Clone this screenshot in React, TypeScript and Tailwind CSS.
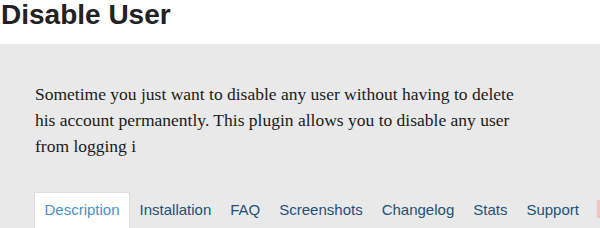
export default function App() {
    const tabs = ["Installation", "FAQ", "Screenshots", "Changelog", "Stats", "Support"];

    return (
        <div className="w-[600px] h-[228px] overflow-hidden bg-white">
            {/* Title */}
            <div className="h-[44px] pl-[1px]">
                <h1
                    className="text-[28px] leading-[30px] font-bold text-[#222]"
                    style={{ fontFamily: '"Liberation Sans", Arial, sans-serif' }}
                >
                    Disable User
                </h1>
            </div>

            {/* Plugin header panel */}
            <div className="h-[184px] bg-[#e9e9e9] pl-[35px] pt-[37px] flex flex-col">
                <p
                    className="text-[17.5px] leading-[26px] text-[#1a1a1a] whitespace-nowrap"
                    style={{ fontFamily: '"Liberation Serif", Georgia, serif' }}
                >
                    Sometime you just want to disable any user without having to delete
                    <br />
                    his account permanently. This plugin allows you to disable any user
                    <br />
                    from logging i
                </p>

                <nav
                    className="mt-auto flex items-end text-[15px] -ml-[1px]"
                    style={{ fontFamily: '"Liberation Sans", Arial, sans-serif' }}
                >
                    <span className="px-[9.5px] pt-[6px] pb-[7px] bg-white border border-b-0 border-[#ddd] rounded-t-[2px] text-[#4b92c6]">
                        Description
                    </span>
                    {tabs.map((t) => (
                        <span key={t} className="px-[9.5px] pt-[6px] pb-[7px] text-[#235078]">
                            {t}
                        </span>
                    ))}
                    <span className="ml-[9px] mb-[10px] w-[10px] h-[18px] shrink-0 bg-[#f1c4c4]" />
                </nav>
            </div>
        </div>
    );
}
